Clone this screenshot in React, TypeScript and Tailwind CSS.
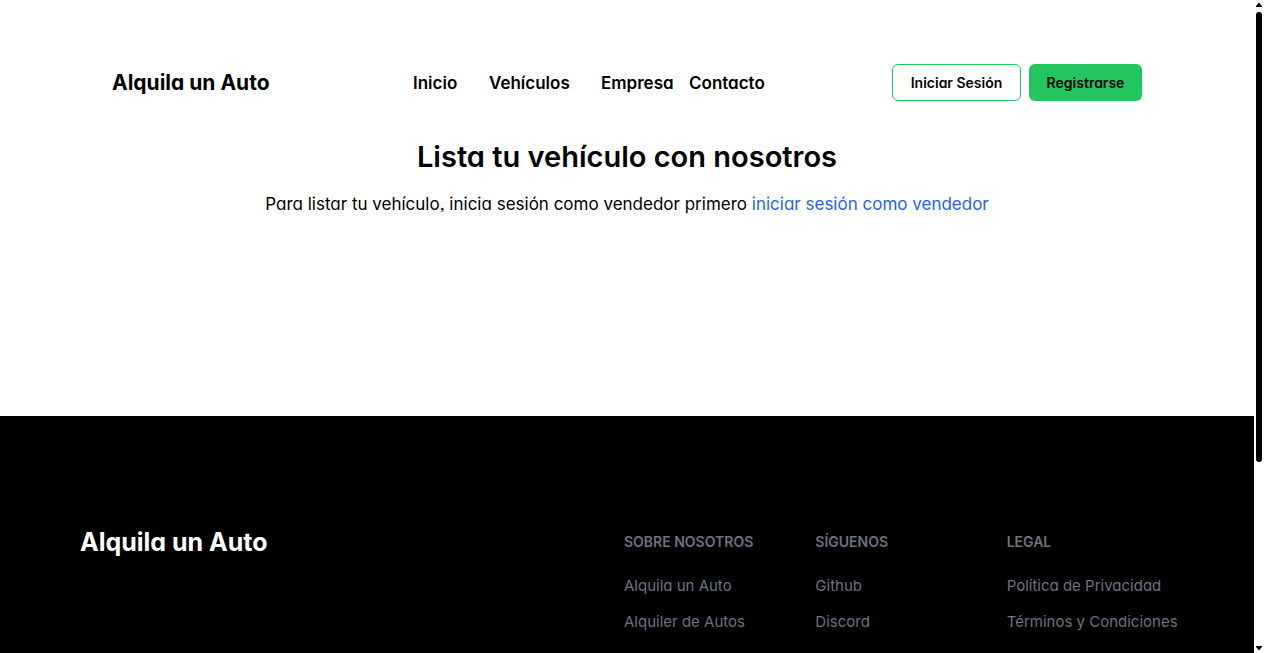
import React from "react";

const columns = [
  { title: "Sobre nosotros", links: ["Alquila un Auto", "Alquiler de Autos"] },
  { title: "Síguenos", links: ["Github", "Discord"] },
  { title: "Legal", links: ["Política de Privacidad", "Términos y Condiciones"] },
];

function Header() {
  return (
    <header className="flex items-center justify-between px-28 pt-16">
      <a href="#inicio" className="w-[158px] text-[21px] leading-7 font-bold whitespace-nowrap">
        Alquila un Auto
      </a>
      <nav aria-label="Principal" className="flex text-[17px] leading-6 font-semibold whitespace-nowrap">
        <a href="#inicio" className="w-[76px]">Inicio</a>
        <a href="#vehiculos" className="w-[112px]">Vehículos</a>
        <a href="#empresa" className="w-[88px]">Empresa</a>
        <a href="#contacto" className="w-[60px]">Contacto</a>
      </nav>
      <div className="flex gap-2 text-sm leading-5 font-semibold whitespace-nowrap">
        <button type="button" className="h-[37px] w-[129px] rounded-md border border-[#22c55e]">
          Iniciar Sesión
        </button>
        <button type="button" className="h-[37px] w-[113px] rounded-md bg-[#22c55e]">
          Registrarse
        </button>
      </div>
    </header>
  );
}

function Footer() {
  return (
    <footer className="flex justify-between bg-black px-20 pt-[108px] pb-48">
      <a href="#inicio" className="text-[25px] leading-9 font-bold whitespace-nowrap text-white">
        Alquila un Auto
      </a>
      <div className="grid w-[550px] grid-cols-3 gap-6 pt-2 leading-5 text-[#6b7280]">
        {columns.map((column) => (
          <section key={column.title}>
            <h2 className="mb-6 text-sm leading-5 font-semibold whitespace-nowrap uppercase">{column.title}</h2>
            <ul className="flex flex-col gap-4 text-[15px] leading-5 whitespace-nowrap">
              {column.links.map((link) => (
                <li key={link}>
                  <a href="#enlaces">{link}</a>
                </li>
              ))}
            </ul>
          </section>
        ))}
      </div>
    </footer>
  );
}

function ScrollTrack() {
  return (
    <div aria-hidden="true" className="flex w-[10px] shrink-0 flex-col bg-white px-[2px]">
      <svg className="h-3 w-[6px]" viewBox="0 0 6 12">
        <path d="M3 2.5 6 6V7H0V6Z" />
      </svg>
      <div className="grow-[450] rounded-full bg-black" />
      <div className="grow-[179]" />
      <svg className="h-3 w-[6px]" viewBox="0 0 6 12">
        <path d="M0 5H6V6L3 9.5 0 6Z" />
      </svg>
    </div>
  );
}

export default function App() {
  return (
    <div className="flex h-screen bg-white font-['Inter',sans-serif] text-black [font-feature-settings:'cv11','ss03']">
      <div className="min-w-0 flex-1 overflow-y-auto [scrollbar-width:none]">
        <Header />
        <main className="h-[315px] pt-[38px] text-center">
          <h1 className="text-[29px] leading-9 font-semibold">Lista tu vehículo con nosotros</h1>
          <p className="mt-4 text-[17px] leading-[26px]">
            Para listar tu vehículo, inicia sesión como vendedor primero{" "}
            <a href="#vendedor" className="text-[#2563eb]">iniciar sesión como vendedor</a>
          </p>
        </main>
        <Footer />
      </div>
      <ScrollTrack />
    </div>
  );
}
